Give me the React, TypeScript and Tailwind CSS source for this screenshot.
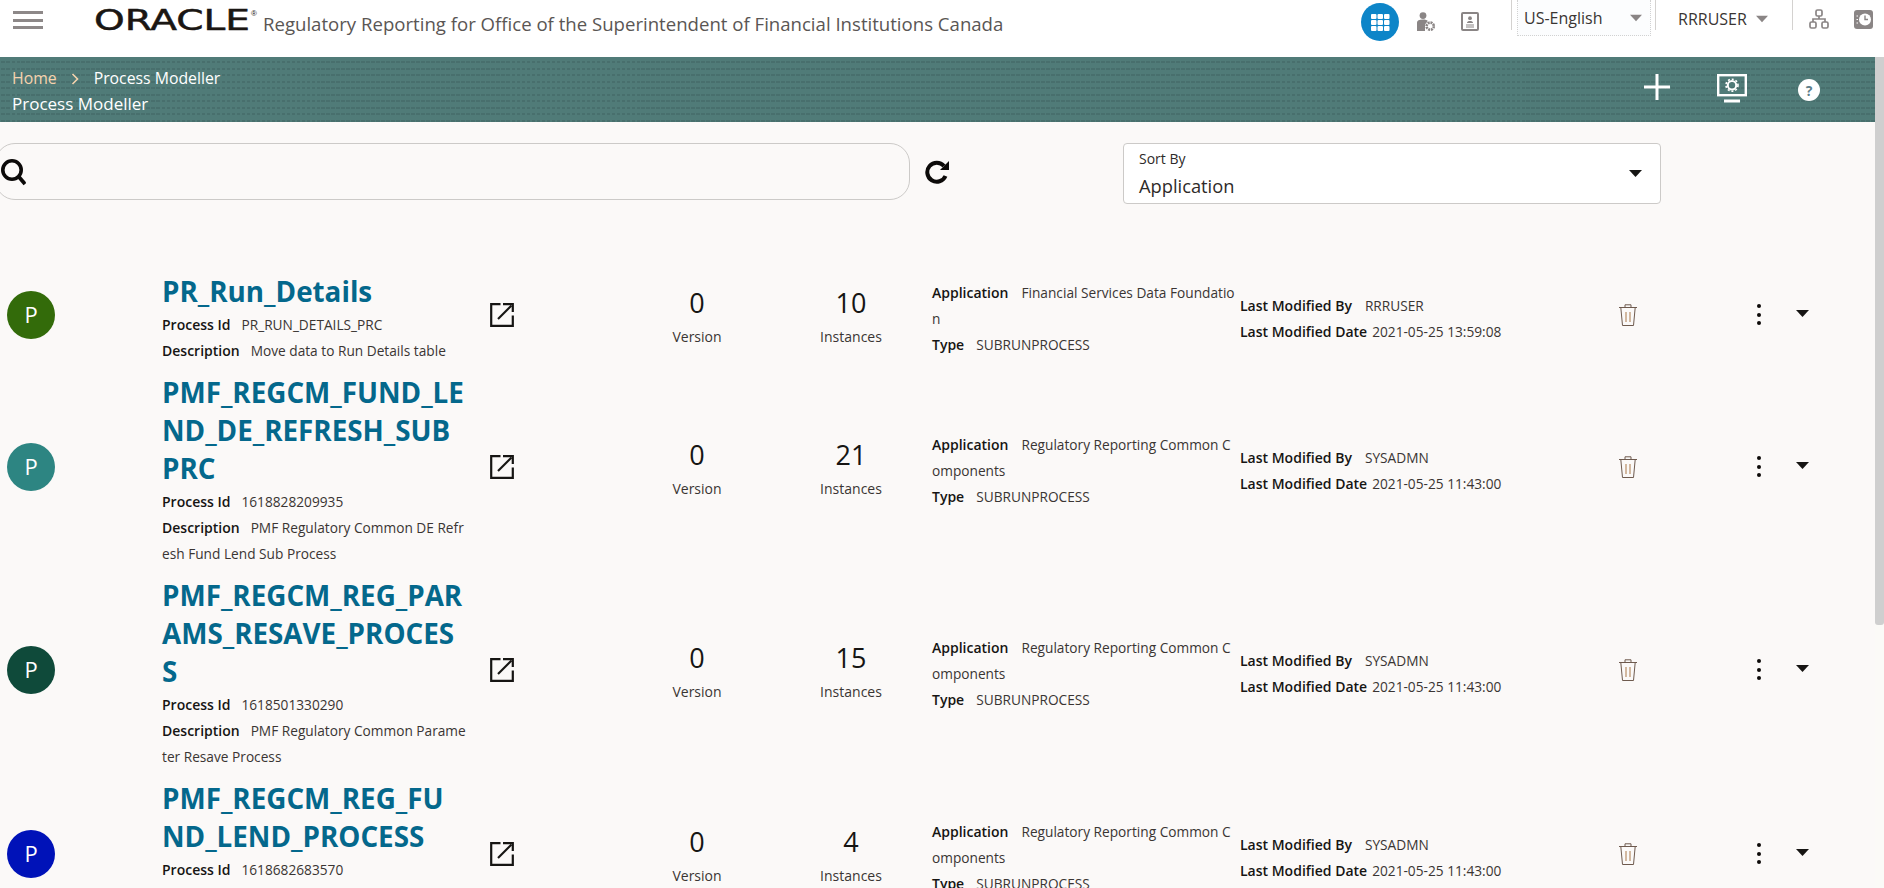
import React from "react";

type Row = {
  color: string;
  title: string[];
  pid: string;
  desc: string[];
  instances: number;
  app: string[];
  by: string;
  date: string;
};

const rows: Row[] = [
  { color: "bg-[#336b0a]", title: ["PR_Run_Details"], pid: "PR_RUN_DETAILS_PRC", desc: ["Move data to Run Details table"], instances: 10, app: ["Financial Services Data Foundatio", "n"], by: "RRRUSER", date: "2021-05-25 13:59:08" },
  { color: "bg-[#2d8582]", title: ["PMF_REGCM_FUND_LE", "ND_DE_REFRESH_SUB", "PRC"], pid: "1618828209935", desc: ["PMF Regulatory Common DE Refr", "esh Fund Lend Sub Process"], instances: 21, app: ["Regulatory Reporting Common C", "omponents"], by: "SYSADMN", date: "2021-05-25 11:43:00" },
  { color: "bg-[#0f4a3a]", title: ["PMF_REGCM_REG_PAR", "AMS_RESAVE_PROCES", "S"], pid: "1618501330290", desc: ["PMF Regulatory Common Parame", "ter Resave Process"], instances: 15, app: ["Regulatory Reporting Common C", "omponents"], by: "SYSADMN", date: "2021-05-25 11:43:00" },
  { color: "bg-[#0012b8]", title: ["PMF_REGCM_REG_FU", "ND_LEND_PROCESS"], pid: "1618682683570", desc: ["PMF Regulatory Common Fund", "Lend Process"], instances: 4, app: ["Regulatory Reporting Common C", "omponents"], by: "SYSADMN", date: "2021-05-25 11:43:00" },
];

function Caret({ className }: { className: string }) {
  return (
    <svg viewBox="0 0 13 7" className={className} fill="currentColor">
      <path d="M0 0H13L6.5 7Z" />
    </svg>
  );
}

function Divider() {
  return <div className="w-px h-[30px] bg-[#d4d2d0] shrink-0" />;
}

function Header() {
  return (
    <header className="h-[57px] shrink-0 bg-white flex items-start">
      <div className="w-[30px] ml-[13px] mt-[11px] flex flex-col gap-[4.5px] shrink-0">
        <div className="h-[3px] bg-[#8d8888]" />
        <div className="h-[3px] bg-[#8d8888]" />
        <div className="h-[3px] bg-[#8d8888]" />
      </div>
      <svg viewBox="0 0 169 24" className="w-[169px] h-[24px] ml-[51px] mt-[8px] shrink-0">
        <text x="0" y="22" textLength="156" lengthAdjust="spacingAndGlyphs" fontFamily="'DejaVu Sans', sans-serif" fontSize="28" fill="#1a1613" stroke="#1a1613" strokeWidth="0.5">ORACLE</text>
        <text x="157" y="8" fontFamily="'Liberation Sans', sans-serif" fontSize="8" fill="#1a1613">®</text>
      </svg>
      <div className="mt-[11px] text-[18.6px] leading-[26px] text-[#5a5654] whitespace-nowrap">
        Regulatory Reporting for Office of the Superintendent of Financial Institutions Canada
      </div>
      <div className="flex-1" />
      <div className="w-[38px] h-[38px] mt-[3px] rounded-full bg-[#0d85c8] flex items-center justify-center shrink-0">
        <svg viewBox="0 0 19 17" className="w-[19px] h-[17px]" fill="#fff">
          {[0, 6.5, 13].map((x) =>
            [0, 6, 12].map((y) => <rect key={`${x}-${y}`} x={x} y={y} width="5.5" height="5" rx="1" />)
          )}
        </svg>
      </div>
      <svg viewBox="0 0 20 20" className="w-[20px] h-[20px] ml-[17px] mt-[12px] shrink-0" fill="#8a8585">
        <circle cx="7" cy="3.6" r="3.4" />
        <path d="M1 19V10.5C1 8.5 3 7.5 7 7.5C9.5 7.5 11 8 11.8 9L9 12.5V19Z" />
        <circle cx="14.2" cy="14.2" r="3.6" fill="none" stroke="#8a8585" strokeWidth="2.6" strokeDasharray="2 0.8" />
      </svg>
      <svg viewBox="0 0 18 19" className="w-[18px] h-[19px] ml-[25px] mt-[12px] shrink-0">
        <rect x="1" y="1" width="16" height="17" rx="1" fill="none" stroke="#8a8585" strokeWidth="2" />
        <circle cx="9" cy="6.2" r="1.9" fill="#8a8585" />
        <path d="M6 11C6 9.5 7.5 9 9 9S12 9.5 12 11Z" fill="#8a8585" />
        <path d="M5 13H13M5 15H13" stroke="#8a8585" strokeWidth="1" />
      </svg>
      <div className="ml-[32px] shrink-0"><Divider /></div>
      <div className="w-[134px] h-[36px] ml-[5px] border-b border-x border-dotted border-[#d2d2d2] bg-[#fcfdfe] flex items-center pl-[6px] pr-[8px] shrink-0">
        <span className="text-[16px] text-[#3a3533] flex-1">US-English</span>
        <Caret className="w-[12px] h-[8px] text-[#8a8585]" />
      </div>
      <div className="ml-[4px] shrink-0"><Divider /></div>
      <div className="ml-[22px] mt-[6px] w-[114px] flex items-center shrink-0">
        <span className="text-[16px] leading-[26px] text-[#3a3533] w-[78px]">RRRUSER</span>
        <Caret className="w-[12px] h-[8px] text-[#8a8585]" />
      </div>
      <Divider />
      <svg viewBox="0 0 20 20" className="w-[20px] h-[20px] ml-[16px] mt-[9px] shrink-0" fill="none" stroke="#8a8585" strokeWidth="1.7">
        <rect x="7" y="1" width="6" height="6" rx="1.5" />
        <rect x="1" y="13" width="6" height="6" rx="1.5" />
        <rect x="13" y="13" width="6" height="6" rx="1.5" />
        <path d="M10 7V10M4 13V10H16V13" />
      </svg>
      <svg viewBox="0 0 19 19" className="w-[19px] h-[19px] ml-[25px] mt-[10px] shrink-0">
        <rect x="0" y="0" width="19" height="19" rx="3" fill="#8a8585" />
        <circle cx="11" cy="9.5" r="6" fill="#fff" />
        <path d="M11 5.5V9.5H14" stroke="#8a8585" strokeWidth="1.4" fill="none" />
        <path d="M2.5 6H4M2.5 9.5H4M2.5 13H4" stroke="#fff" strokeWidth="1.2" />
      </svg>
      <div className="w-[11px] shrink-0" />
    </header>
  );
}

function Band() {
  return (
    <div className="h-[65px] shrink-0 bg-[#507b78] bg-[repeating-linear-gradient(90deg,#507b78_0_1.5px,transparent_1.5px_5px),repeating-linear-gradient(0deg,#486f6d_0_2px,transparent_2px_6.5px)] flex items-start text-white">
      <div className="pl-[12px] flex-1">
        <div className="flex items-center h-[26px] mt-[9px] text-[15.8px]">
          <span className="text-[#f6d3ae]">Home</span>
          <svg viewBox="0 0 8 12" className="w-[8px] h-[12px] ml-[14px] mr-[15px]" fill="none" stroke="#f6d3ae" strokeWidth="1.6">
            <path d="M1.5 1L6.5 6L1.5 11" />
          </svg>
          <span>Process Modeller</span>
        </div>
        <div className="h-[26px] leading-[24px] text-[17px]">Process Modeller</div>
      </div>
      <svg viewBox="0 0 26 26" className="w-[26px] h-[26px] mt-[17px] shrink-0" stroke="#fff" strokeWidth="3">
        <path d="M13 0V26M0 13H26" />
      </svg>
      <svg viewBox="0 0 30 29" className="w-[30px] h-[29px] ml-[47px] mt-[17px] shrink-0">
        <rect x="1.2" y="1.2" width="27.6" height="20" fill="none" stroke="#fff" strokeWidth="2.4" />
        <rect x="7" y="25.5" width="16" height="3" fill="#fff" />
        <circle cx="15" cy="11.2" r="4.2" fill="none" stroke="#fff" strokeWidth="2" />
        <circle cx="15" cy="11.2" r="6" fill="none" stroke="#fff" strokeWidth="1.6" strokeDasharray="2 1.9" />
      </svg>
      <div className="w-[22px] h-[22px] ml-[51px] mt-[22px] rounded-full bg-white flex items-center justify-center text-[#5f7f8a] text-[14px] font-bold shrink-0">
        ?
      </div>
      <div className="w-[55px] shrink-0" />
    </div>
  );
}

function Toolbar() {
  return (
    <div className="flex items-start pt-[21px] shrink-0">
      <div className="ml-[-5px] w-[915px] h-[57px] rounded-[20px] border border-[#cccac8] flex items-center pl-[5px] shrink-0">
        <svg viewBox="0 0 25 27" className="w-[25px] h-[27px] mt-[2px]" fill="none" stroke="#0c0a09">
          <circle cx="11" cy="11" r="9.2" strokeWidth="3.6" />
          <path d="M18 18L24 25" strokeWidth="3.8" />
        </svg>
      </div>
      <svg viewBox="0 0 25 24" className="w-[25px] h-[24px] ml-[15px] mt-[17px] shrink-0" fill="none" stroke="#0c0a09" strokeWidth="4">
        <path d="M20.5 16A9.5 9.5 0 1 1 19 6" />
        <path d="M24 1V10H15" fill="#0c0a09" stroke="none" />
      </svg>
      <div className="ml-[173px] w-[538px] h-[61px] rounded-[4px] border border-[#cccac8] bg-white pl-[15px] pr-[18px] flex items-center shrink-0">
        <div className="flex-1">
          <div className="text-[14px] leading-[18px] mt-[1px] text-[#2e2a28]">Sort By</div>
          <div className="text-[18.3px] leading-[26px] mt-[5px] text-[#2e2a28]">Application</div>
        </div>
        <Caret className="w-[13px] h-[7px] text-[#161513]" />
      </div>
    </div>
  );
}

function ExternalIcon() {
  return (
    <svg viewBox="0 0 24 24" className="w-[24px] h-[24px]" fill="none" stroke="#161513" strokeWidth="2.2">
      <path d="M10.5 1.2H1.2V22.8H22.8V12.5" />
      <path d="M8 16L21.5 2.5" />
      <path d="M13 1.2H22.8V9" />
    </svg>
  );
}

function TrashIcon() {
  return (
    <svg viewBox="0 0 18 22" className="w-[18px] h-[22px]" fill="none" stroke="#6e5a4e" strokeWidth="1">
      <path d="M0 3.5H18M6 3.5V0.8H12V3.5" />
      <path d="M1.8 3.5L3.5 21.5H14.5L16.2 3.5" />
      <path d="M7 8V18M11 8V18" stroke="#c9a98a" strokeWidth="1.6" />
    </svg>
  );
}

function Line({ label, children, gap }: { label: string; children: React.ReactNode; gap: string }) {
  return (
    <div className="pt-[4px] leading-[22px] whitespace-nowrap">
      <span className="font-semibold text-[14px] text-[#161513]">{label}</span>
      <span className={gap}>{children}</span>
    </div>
  );
}

function ProcessRow({ row }: { row: Row }) {
  return (
    <div className="flex items-center text-[13.7px] text-[#3a3533] shrink-0 mb-[11px]">
      <div className="w-[162px] pl-[7px] shrink-0">
        <div className={`w-[48px] h-[48px] mb-[5px] rounded-full ${row.color} flex items-center justify-center text-white text-[22px]`}>P</div>
      </div>
      <div className="w-[328px] shrink-0">
        {row.title.map((t) => (
          <div key={t} className="text-[27.8px] leading-[38px] font-bold text-[#04688c] whitespace-nowrap">{t}</div>
        ))}
        <Line label="Process Id" gap="ml-[11px]">{row.pid}</Line>
        <Line label="Description" gap="ml-[11px]">{row.desc[0]}</Line>
        {row.desc.slice(1).map((d) => (
          <div key={d} className="pt-[4px] leading-[22px] whitespace-nowrap">{d}</div>
        ))}
      </div>
      <div className="w-[147px] shrink-0 mb-[5px]"><ExternalIcon /></div>
      <div className="w-[120px] text-center shrink-0 mt-[5px]">
        <div className="text-[27px] leading-[34px] text-[#161513]">0</div>
        <div className="text-[14px] leading-[34px]">Version</div>
      </div>
      <div className="w-[120px] ml-[34px] text-center shrink-0 mt-[5px]">
        <div className="text-[27px] leading-[34px] text-[#161513]">{row.instances}</div>
        <div className="text-[14px] leading-[34px]">Instances</div>
      </div>
      <div className="w-[302px] ml-[21px] shrink-0">
        <Line label="Application" gap="ml-[13px]">{row.app[0]}</Line>
        <div className="pt-[4px] leading-[22px]">{row.app[1]}</div>
        <Line label="Type" gap="ml-[12px]">SUBRUNPROCESS</Line>
      </div>
      <div className="w-[379px] ml-[6px] shrink-0">
        <Line label="Last Modified By" gap="ml-[13px]">{row.by}</Line>
        <Line label="Last Modified Date" gap="ml-[5px]">{row.date}</Line>
      </div>
      <div className="w-[18px] shrink-0 mb-[5px]"><TrashIcon /></div>
      <div className="w-[5px] ml-[120px] shrink-0 mb-[5px] flex flex-col gap-[4.5px]">
        <div className="w-[4px] h-[4px] rounded-full bg-[#0c0a09]" />
        <div className="w-[4px] h-[4px] rounded-full bg-[#0c0a09]" />
        <div className="w-[4px] h-[4px] rounded-full bg-[#0c0a09]" />
      </div>
      <div className="ml-[34px] shrink-0 mb-[7px] flex"><Caret className="w-[13px] h-[7px] text-[#161513]" /></div>
    </div>
  );
}

export default function App() {
  return (
    <div className="h-[888px] w-[1884px] overflow-hidden flex flex-col bg-[#fbf9f8] font-['Open_Sans',sans-serif]">
      <Header />
      <div className="flex-1 flex min-h-0">
        <div className="flex-1 min-w-0 flex flex-col overflow-hidden">
          <Band />
          <Toolbar />
          <div className="pt-[68px] flex flex-col">
            {rows.map((r) => (
              <ProcessRow key={r.pid} row={r} />
            ))}
          </div>
        </div>
        <div className="w-[9px] shrink-0 bg-[#fbfaf7]">
          <div className="h-[568px] bg-[#cfcfcf] rounded-b-[3px]" />
        </div>
      </div>
    </div>
  );
}
